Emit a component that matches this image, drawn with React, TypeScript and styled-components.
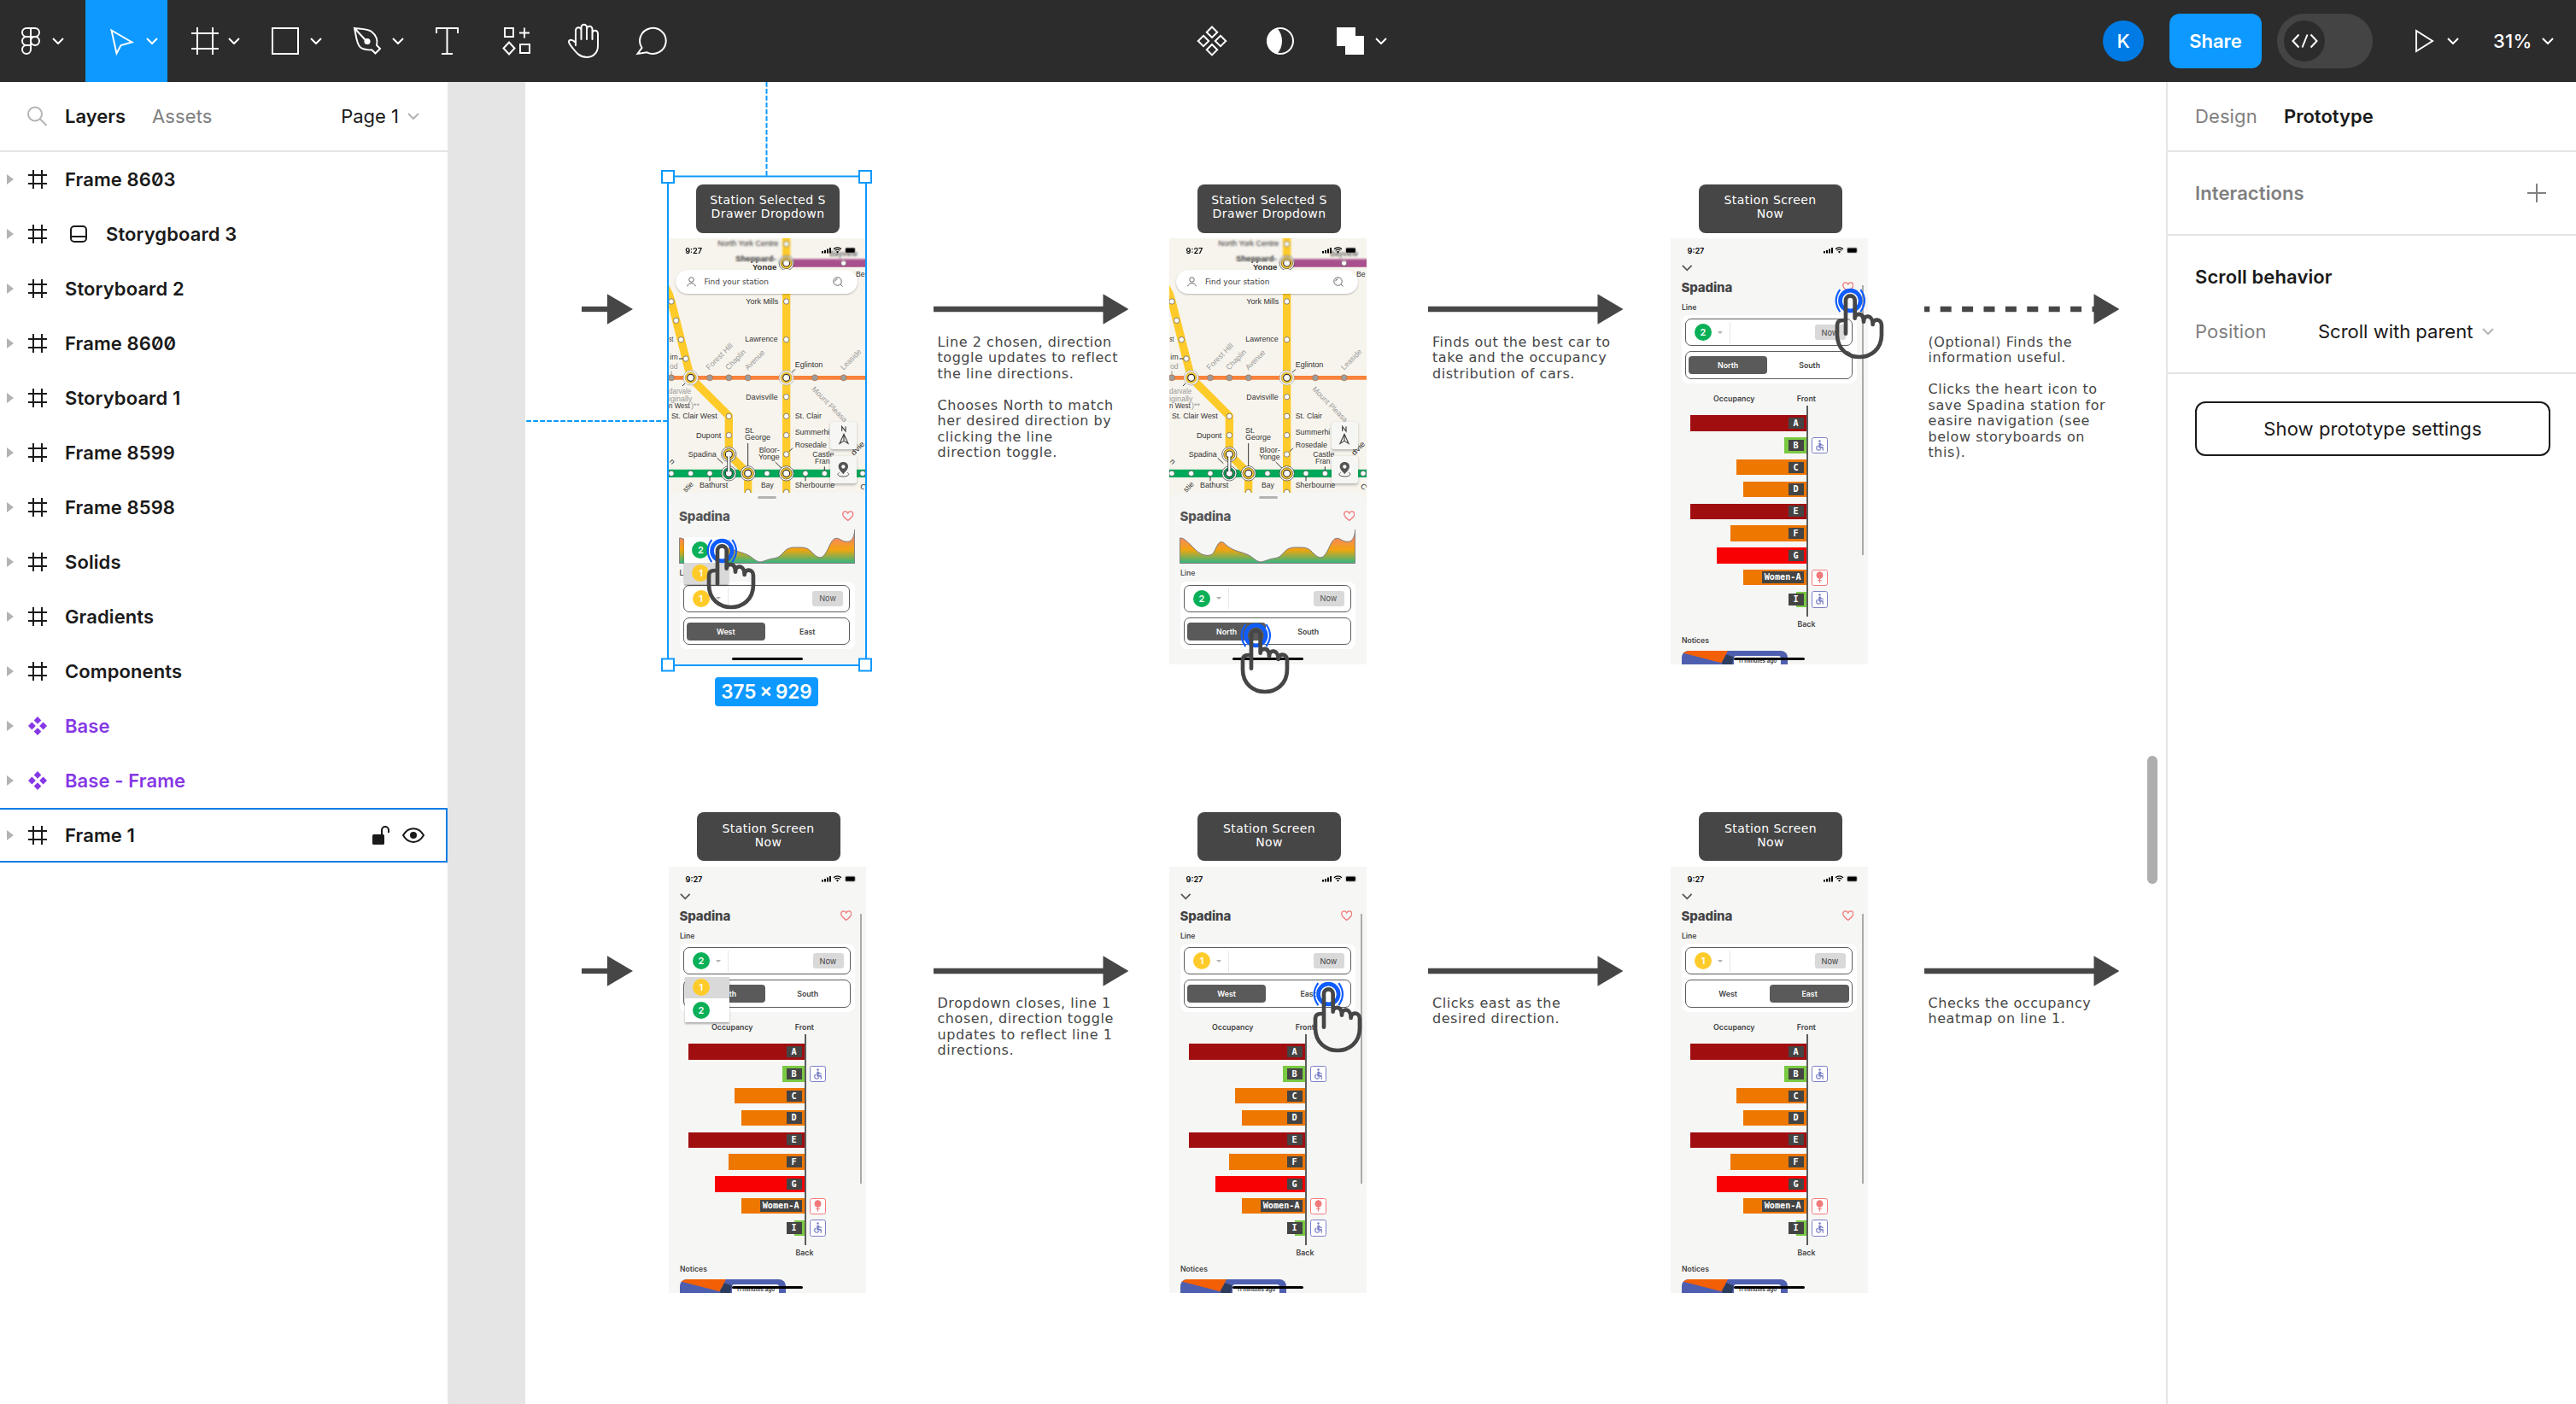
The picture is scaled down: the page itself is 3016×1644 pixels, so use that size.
import React from "react";
import styled, { createGlobalStyle, css } from "styled-components";
import { MdAccessible } from "react-icons/md";

const ui = `Inter, "Liberation Sans", sans-serif`;
const round = `"DejaVu Sans", Lato, sans-serif`;
const ink = "#464646";
const blue = "#0d99ff";

const Global = createGlobalStyle`
  * { box-sizing: border-box; }
  html, body { margin: 0; padding: 0; overflow: hidden; background: #fff; }
  body { font-family: ${ui}; color: #1a1a1a; }
  svg { display: block; flex-shrink: 0; }
`;

const Shell = styled.div`
  display: flex;
  flex-direction: column;
  width: 3016px;
  height: 1644px;
  overflow: hidden;
`;

/* ---------- toolbar ---------- */

const Toolbar = styled.header`
  display: grid;
  grid-template-columns: 1379px 1083px 1fr;
  height: 96px;
  flex-shrink: 0;
  background: #2c2c2c;
  color: #fff;
`;

const ToolGroup = styled.div`
  display: flex;
  align-items: stretch;
`;

const Tool = styled.button<{ $width?: number; $active?: boolean; $pad?: number; $gap?: number }>`
  display: flex;
  align-items: center;
  gap: ${(p) => p.$gap ?? 10}px;
  width: ${(p) => p.$width ?? 80}px;
  padding: 0 0 0 ${(p) => p.$pad ?? 20}px;
  border: 0;
  color: #fff;
  background: ${(p) => (p.$active ? blue : "transparent")};
`;

const Account = styled.div`
  display: flex;
  align-items: center;
`;

const Avatar = styled.div`
  display: grid;
  place-items: center;
  width: 48px;
  height: 48px;
  margin-right: 30px;
  border-radius: 50%;
  background: #007be5;
  font-size: 22px;
  font-weight: 500;
`;

const ShareButton = styled.button`
  width: 108px;
  height: 64px;
  margin-right: 18px;
  border: 0;
  border-radius: 12px;
  background: ${blue};
  color: #fff;
  font: 600 22px ${ui};
`;

const DevToggle = styled.div`
  display: flex;
  align-items: center;
  width: 112px;
  height: 64px;
  padding-left: 8px;
  border-radius: 32px;
  background: #444;
`;

const Knob = styled.div`
  display: grid;
  place-items: center;
  width: 48px;
  height: 48px;
  border-radius: 50%;
  background: #2c2c2c;
`;

const PlayButton = styled.div`
  display: flex;
  align-items: center;
  gap: 14px;
  margin-left: 49px;
  width: 93px;
`;

const ZoomLevel = styled.div`
  display: flex;
  align-items: center;
  width: 96px;
  font-size: 22px;
  font-weight: 500;
  letter-spacing: 0.3px;
  & > span { width: 57px; margin-left: -1px; }
`;

/* ---------- panels ---------- */

const Body = styled.main`
  display: flex;
  flex: 1;
  min-height: 0;
`;

const LeftPanel = styled.aside`
  width: 524px;
  flex-shrink: 0;
  background: #fff;
`;

const LeftTabs = styled.div`
  display: flex;
  align-items: center;
  height: 82px;
  padding: 0 33px 0 32px;
  border-bottom: 2px solid #e5e5e5;
`;

const Tab = styled.span<{ $active?: boolean; $width: number }>`
  width: ${(p) => p.$width}px;
  font-size: 22px;
  letter-spacing: ${(p) => (p.$active ? 0 : 0.1)}px;
  font-weight: ${(p) => (p.$active ? 600 : 400)};
  color: ${(p) => (p.$active ? "#1a1a1a" : "#808080")};
`;

const PagePicker = styled.span`
  display: flex;
  align-items: center;
  gap: 10px;
  margin-left: auto;
  font-size: 22px;
  white-space: nowrap;
`;

const LayerRow = styled.div<{ $purple?: boolean; $focus?: boolean }>`
  display: flex;
  align-items: center;
  height: 64px;
  padding: 0 27px 0 8px;
  color: ${(p) => (p.$purple ? "#8638e5" : "#1a1a1a")};
  box-shadow: ${(p) => (p.$focus ? "inset -2px 0 #0c7ce5, inset 0 2px #0c7ce5, inset 0 -2px #0c7ce5" : "none")};
`;

const LayerIcon = styled.span<{ $width: number }>`
  display: flex;
  align-items: center;
  width: ${(p) => p.$width}px;
`;

const LayerName = styled.span`
  flex: 1;
  font-size: 22px;
  font-weight: 600;
  letter-spacing: 0.1px;
  font-feature-settings: "zero" 1;
`;

const RowActions = styled.span`
  display: flex;
  align-items: center;
  gap: 15px;
`;

const RightPanel = styled.aside`
  width: 480px;
  flex-shrink: 0;
  border-left: 2px solid #e5e5e5;
  background: #fff;
`;

const PanelSection = styled.section<{ $height: number; $column?: boolean }>`
  display: flex;
  flex-direction: ${(p) => (p.$column ? "column" : "row")};
  align-items: ${(p) => (p.$column ? "stretch" : "center")};
  height: ${(p) => p.$height}px;
  padding: 0 35px 0 32px;
  border-bottom: 2px solid #e5e5e5;
`;

const SectionTitle = styled.h3<{ $muted?: boolean }>`
  flex: 1;
  margin: 0;
  font-size: 22px;
  font-weight: 600;
  letter-spacing: 0.1px;
  color: ${(p) => (p.$muted ? "#808080" : "#1a1a1a")};
`;

const ScrollTitle = styled(SectionTitle)`
  flex: none;
  padding-top: 32px;
  line-height: 32px;
`;

const PropertyRow = styled.div`
  display: flex;
  align-items: center;
  height: 64px;
  margin-top: 16px;
  font-size: 22px;
  letter-spacing: 0.1px;
`;

const PropertyLabel = styled.span`
  width: 144px;
  color: #808080;
`;

const PropertyValue = styled.span`
  display: flex;
  align-items: center;
  gap: 11px;
  letter-spacing: 0;
`;

const OutlineButton = styled.button`
  display: block;
  width: 416px;
  height: 64px;
  margin: 32px 0 0 32px;
  border: 2px solid #1a1a1a;
  border-radius: 12px;
  background: #fff;
  color: #1a1a1a;
  font: 400 22px ${ui};
  letter-spacing: 0.1px;
`;

/* ---------- canvas ---------- */

const Canvas = styled.section`
  position: relative;
  flex: 1;
  padding-left: 91px;
  background: #e5e5e5;
  overflow: hidden;
`;

const Board = styled.div`
  position: relative;
  height: 100%;
  background: #fff;
`;

/* Items on the free canvas; coordinates are those of the window. */
const at = css<{ $x: number; $y: number }>`
  position: absolute;
  left: ${(p) => p.$x - 615}px;
  top: ${(p) => p.$y - 96}px;
`;

const Pinned = styled.div<{ $x: number; $y: number }>`
  ${at}
`;

const Tag = styled.div<{ $x: number; $y: number }>`
  ${at}
  width: 168px;
  height: 57px;
  padding-top: 10.5px;
  border-radius: 8px;
  background: ${ink};
  color: #fff;
  text-align: center;
  white-space: pre;
  font: 400 14px/16px ${round};
  letter-spacing: 0.4px;
`;

const Note = styled.div<{ $x: number; $y: number }>`
  ${at}
  color: ${ink};
  white-space: pre;
  font: 400 16px/18.45px ${round};
  letter-spacing: 0.55px;
`;

const SizeBadge = styled.div<{ $x: number; $y: number }>`
  ${at}
  display: grid;
  place-items: center;
  width: 121px;
  height: 34px;
  border-radius: 4px;
  background: ${blue};
  color: #fff;
  font-size: 22.5px;
  font-weight: 600;
  word-spacing: -2px;
  white-space: nowrap;
`;

const ScrollThumb = styled.div<{ $x: number; $y: number }>`
  ${at}
  width: 12px;
  height: 150px;
  border-radius: 6px;
  background: #aeaeae;
`;

/* ---------- phone ---------- */

const Phone = styled.div<{ $x: number; $y: number; $map?: boolean }>`
  ${at}
  display: flex;
  flex-direction: column;
  width: 231px;
  height: 499px;
  overflow: hidden;
  background: ${(p) => (p.$map ? "#f7f4ed" : "#f6f6f5")};
  color: #444;
`;

const StatusBar = styled.div<{ $frosted?: boolean }>`
  position: relative;
  display: flex;
  align-items: center;
  justify-content: space-between;
  height: 28.4px;
  flex-shrink: 0;
  padding: 0 11px 0 19.6px;
  color: #000;
  font-size: 9.2px;
  font-weight: 600;
  backdrop-filter: ${(p) => (p.$frosted ? "blur(1.1px)" : "none")};
`;

const MapArea = styled.div`
  position: relative;
  height: 298px;
  flex-shrink: 0;
`;

const MapLayer = styled.div`
  position: absolute;
  inset: 0;
`;

const SearchBar = styled.div`
  position: relative;
  display: flex;
  align-items: center;
  width: 213px;
  height: 28px;
  margin: 8.3px 0 0 8px;
  padding: 0 17px 0 13px;
  border-radius: 14px;
  background: #fff;
  box-shadow: 0 1px 2px rgba(0, 0, 0, 0.25);
  font: 400 9px ${round};
  & > span { flex: 1; margin-left: 10px; }
`;

const MapButton = styled.div<{ $top: number }>`
  position: absolute;
  left: 189.5px;
  top: ${(p) => p.$top}px;
  display: grid;
  place-items: center;
  width: 31.3px;
  height: 31.7px;
  border-radius: 3px;
  background: #f6f6f5;
  box-shadow: 0 1.5px 3px rgba(0, 0, 0, 0.25);
`;

const Drawer = styled.div`
  position: relative;
  flex: 1;
  border-radius: 14px 14px 0 0;
  background: #f6f6f5;
  color: #555;
`;

const HandleRow = styled.div`
  display: flex;
  justify-content: center;
  height: 11.2px;
  padding-top: 4px;
`;

const Handle = styled.i`
  width: 22px;
  height: 3.2px;
  border-radius: 2px;
  background: #b3b3b3;
`;

const TitleRow = styled.div<{ $height: number }>`
  display: flex;
  align-items: center;
  justify-content: space-between;
  height: ${(p) => p.$height}px;
  flex-shrink: 0;
  padding: 0 ${(p) => (p.$height > 32 ? 17 : 14)}px 0 12.5px;
  font-size: 15px;
  font-weight: 800;
  letter-spacing: -0.15px;
`;

const Collapse = styled.div`
  display: flex;
  align-items: center;
  height: 13px;
  flex-shrink: 0;
  padding-left: 13px;
`;

const Profile = styled.div`
  height: 43.9px;
  padding-left: 12px;
`;

const FieldLabel = styled.div<{ $height: number }>`
  height: ${(p) => p.$height}px;
  flex-shrink: 0;
  padding-left: 13px;
  font-size: 8.6px;
  font-weight: 600;
  line-height: 15.6px;
`;

const Controls = styled.div`
  display: flex;
  flex-direction: column;
  gap: 6.2px;
  width: 204.8px;
  height: 79.4px;
  flex-shrink: 0;
  margin-left: 13.2px;
  padding: 3.8px 5.2px 0 4.2px;
  border-radius: 8px;
  background: #fff;
`;

const Field = styled.div`
  display: flex;
  align-items: center;
  height: 32.2px;
  border: 1px solid #5c5c5c;
  border-radius: 7px;
`;

const LineField = styled(Field)`
  padding: 0 7.3px 0 9.6px;
`;

const Bullet = styled.b<{ $line: number }>`
  display: grid;
  place-items: center;
  width: 20px;
  height: 20px;
  flex-shrink: 0;
  border-radius: 50%;
  background: ${(p) => (p.$line === 1 ? "#ffcb2a" : "#0ab057")};
  color: #fff;
  font: 600 11px ${ui};
`;

const Caret = styled.i`
  margin-left: 7px;
  border: 3.5px solid transparent;
  border-top-color: #b0b0b0;
  border-bottom-width: 0;
`;

const Divider = styled.i`
  width: 1.5px;
  height: 25px;
  margin: 0 auto 0 8px;
  background: #e6e6e6;
`;

const NowButton = styled.span`
  display: grid;
  place-items: center;
  width: 36px;
  height: 17.8px;
  border-radius: 3px;
  background: #d9d9d9;
  font-size: 9.2px;
`;

const ToggleField = styled(Field)`
  gap: 3.2px;
  padding: 0 3px 0 2.6px;
`;

const Side = styled.span<{ $on?: boolean }>`
  display: grid;
  place-items: center;
  flex: 1;
  height: 20.8px;
  border-radius: 4px;
  background: ${(p) => (p.$on ? "#5a5a5a" : "transparent")};
  color: ${(p) => (p.$on ? "#fff" : "#444")};
  font-size: 8.8px;
  font-weight: 600;
`;

const Dropdown = styled.div<{ $top: number }>`
  position: absolute;
  left: 18.6px;
  top: ${(p) => p.$top}px;
  width: 52.2px;
  background: #fff;
  box-shadow: 0 2px 2px rgba(0, 0, 0, 0.3);
`;

const Option = styled.div<{ $hover?: boolean; $height: number }>`
  display: flex;
  align-items: center;
  height: ${(p) => p.$height}px;
  padding-left: 9.3px;
  background: ${(p) => (p.$hover ? "#d9d9d9" : "#fff")};
`;

const HomeBar = styled.i`
  position: absolute;
  left: 74px;
  bottom: 5px;
  width: 83px;
  height: 3px;
  border-radius: 2px;
  background: #000;
`;

const PageScroll = styled.i`
  position: absolute;
  left: 224px;
  top: 55px;
  width: 2px;
  height: 316px;
  background: #aaa;
`;

const ChartHead = styled.div`
  display: flex;
  height: 26.8px;
  flex-shrink: 0;
  padding-left: 50px;
  font-size: 8.8px;
  font-weight: 600;
  line-height: 35.6px;
  & > span:first-child { width: 97.8px; }
`;

const ChartBody = styled.div`
  display: flex;
  height: 247px;
  flex-shrink: 0;
`;

const Bars = styled.div`
  display: flex;
  flex-direction: column;
  align-items: flex-end;
  gap: 7.4px;
  width: 161px;
  padding-top: 11px;
  border-right: 2px solid #5c5c5c;
`;

const Bar = styled.div<{ $width: number; $color: string }>`
  display: flex;
  align-items: center;
  justify-content: flex-end;
  width: ${(p) => p.$width}px;
  height: 18.4px;
  flex-shrink: 0;
  padding-right: 3.4px;
  background: ${(p) => p.$color};
`;

const CarName = styled.b`
  flex-shrink: 0;
  min-width: 18px;
  height: 13.4px;
  padding: 0 3px;
  background: #444;
  color: #fff;
  text-align: center;
  font: 700 10.2px/13.4px "DejaVu Sans Mono", "Liberation Mono", monospace;
`;

const Amenities = styled.div`
  display: flex;
  flex-direction: column;
  gap: 6.4px;
  padding: 10.6px 0 0 4px;
`;

const Amenity = styled.div<{ $color?: string }>`
  display: grid;
  place-items: center;
  width: 19px;
  height: 19.4px;
  border-radius: 2.5px;
  border: ${(p) => (p.$color ? `1px solid ${p.$color}` : "0")};
  background: ${(p) => (p.$color ? "#fff" : "transparent")};
  color: ${(p) => p.$color};
`;

const BackLabel = styled.div`
  height: 19px;
  flex-shrink: 0;
  padding-left: 148.5px;
  font-size: 8.8px;
  font-weight: 600;
  line-height: 18.4px;
`;

const NoticesLabel = styled(FieldLabel)`
  padding-top: 1.5px;
`;

const NoticeCard = styled.div`
  position: relative;
  display: flex;
  width: 123.6px;
  height: 40px;
  flex-shrink: 0;
  margin-left: 13.2px;
  border-radius: 8px;
  overflow: hidden;
  background: #4f5fb0;
`;

const NoticeTime = styled.span`
  width: 55px;
  height: 30px;
  margin: 6.5px 0 0 -1px;
  padding-left: 5px;
  border-radius: 3px 3px 0 0;
  background: #fff;
  color: #333;
  white-space: nowrap;
  font-size: 6.4px;
  font-weight: 600;
  line-height: 12px;
`;

/* ---------- icons ---------- */

const Chevron = ({ color = "#fff", size = 14 }: { color?: string; size?: number }) => (
  <svg width={size} height={size / 2 + 1} viewBox="0 0 14 8" fill="none" stroke={color} strokeWidth="2">
    <path d="M1 1l6 6 6-6" />
  </svg>
);

const Glyph = ({ x, y, w, h, children }: { x: number; y: number; w: number; h: number; children: React.ReactNode }) => (
  <svg width={w} height={h} viewBox={`${x} ${y} ${w} ${h}`} fill="none" stroke="currentColor" strokeWidth="2">
    {children}
  </svg>
);

const FigmaLogo = () => (
  <Glyph x={24} y={31} w={24} h={34}>
    <path d="M36 33h-5a5 5 0 0 0 0 10h5zM36 33h5a5 5 0 0 1 0 10h-5zM36 43h-5a5 5 0 0 0 0 10h5z" />
    <circle cx="41" cy="48" r="5" />
    <path d="M36 53h-5a5 5 0 1 0 5 5z" />
  </Glyph>
);

const FrameGlyph = () => (
  <Glyph x={224} y={32} w={32} h={32}>
    <path d="M231 32v32M249 32v32M224 39h32M224 57h32" />
  </Glyph>
);

const MoveGlyph = () => (
  <Glyph x={128} y={31} w={29} h={33}>
    <path d="M130.500 34.500L154.500 48.500L141.500 52L136.500 61.500Z" />
  </Glyph>
);

const PenGlyph = () => (
  <Glyph x={413} y={31} w={34} h={34}>
    <path d="M415 33C423 34 431 34 435 37C440 41 442.500 47 441 53L445 57L439.500 62.500L435.500 58.500C430 58.500 426 58.500 422 55.500C417 51 417 41 415 33ZM415 33L428 47" />
    <circle cx="430" cy="48.500" r="2.600" fill="currentColor" />
  </Glyph>
);

const TextGlyph = () => (
  <Glyph x={510} y={32} w={27} h={32}>
    <path d="M511 39v-6h25v6M523.500 33v30M517 63h13" />
  </Glyph>
);

const ResourcesGlyph = () => (
  <Glyph x={587} y={31} w={35} h={34}>
    <path d="M591 33h10v10h-10zM609 52h11v10h-11zM614 32.500v12M608 38.500h12M596 49.500l6.500 7l-6.500 7l-6.500-7z" />
  </Glyph>
);

const HandGlyph = () => (
  <Glyph x={664} y={27} w={38} h={42}>
    <path
      strokeLinecap="round"
      d="M674 53V35.500a3.200 3.200 0 0 1 6.500 0V46M680.500 46V32a3.200 3.200 0 0 1 6.500 0V46M687 34a3.200 3.200 0 0 1 6.500 0V46M693.500 39a3.200 3.200 0 0 1 6.500 0V54C700 62 694 67 687 67C679 67 675 62 671 57C668 53 666 51 666 49C666 46 670 45.500 674 50"
    />
  </Glyph>
);

const CommentGlyph = () => (
  <Glyph x={744} y={31} w={38} h={34}>
    <path d="M751.500 56A15.300 15 0 1 1 757.500 61.300L746.500 63Z" />
  </Glyph>
);

const ComponentsGlyph = () => (
  <Glyph x={1400} y={29} w={38} h={38}>
    <path d="M1419 31.500l6.200 6.200l-6.200 6.200l-6.200-6.200zM1419 52l6.200 6.200l-6.200 6.200l-6.200-6.200zM1409 41.800l6.200 6.200l-6.200 6.200l-6.200-6.200zM1429 41.800l6.200 6.200l-6.200 6.200l-6.200-6.200z" />
  </Glyph>
);

const MaskGlyph = () => (
  <Glyph x={1482} y={31} w={34} h={34}>
    <circle cx="1499" cy="48" r="15" />
    <path stroke="none" fill="currentColor" d="M1495 33C1503 40 1503 56 1495 63A15.500 15.500 0 0 1 1495 33Z" />
  </Glyph>
);

const UnionGlyph = () => (
  <Glyph x={1565} y={32} w={32} h={32}>
    <path stroke="none" fill="currentColor" d="M1565 32h22v10h10v22h-22v-10h-10z" />
  </Glyph>
);

const SearchGlyph = () => (
  <svg width="24" height="24" viewBox="0 0 24 24" fill="none" stroke="#b3b3b3" strokeWidth="2">
    <circle cx="9" cy="9.500" r="8" />
    <path d="M14.500 15l8 8" />
  </svg>
);

const Hash = () => (
  <svg width="22" height="22" viewBox="0 0 22 22" fill="none" stroke="currentColor" strokeWidth="2">
    <path d="M6 0v22M16 0v22M0 6h22M0 16h22" />
  </svg>
);

const Diamonds = () => (
  <svg width="22" height="22" viewBox="0 0 22 22" fill="currentColor">
    <path d="M11 0l4.300 4.400L11 8.800 6.700 4.400zM11 13.200l4.300 4.400L11 22l-4.300-4.400zM4.400 6.600L8.800 11l-4.400 4.400L0 11zM17.600 6.600L22 11l-4.400 4.400L13.200 11z" />
  </svg>
);

const Triangle = () => (
  <svg width="8" height="12" viewBox="0 0 8 12" fill="#b3b3b3">
    <path d="M0 0l8 6-8 6z" />
  </svg>
);

const DrawerGlyph = () => (
  <svg width="20" height="20" viewBox="0 0 20 20" fill="none" stroke="#1a1a1a" strokeWidth="2">
    <rect x="1" y="1" width="18" height="18" rx="4" />
    <path d="M1 13h18" />
  </svg>
);

const Unlocked = () => (
  <svg width="20" height="22" viewBox="0 0 20 22">
    <rect x="0" y="10" width="14" height="12" rx="1.500" fill="#1a1a1a" />
    <path d="M11 10.500V5a4 4 0 0 1 8 0v3" fill="none" stroke="#1a1a1a" strokeWidth="2" />
  </svg>
);

const Eye = () => (
  <svg width="26" height="18" viewBox="0 0 26 18">
    <path d="M1 9C7-1.500 19-1.500 25 9C19 19.500 7 19.500 1 9Z" fill="none" stroke="#1a1a1a" strokeWidth="2" />
    <circle cx="13" cy="9" r="4" fill="#1a1a1a" />
  </svg>
);

const Heart = () => (
  <svg width="13.500" height="12.500" viewBox="0 0 27 25" fill="none" stroke="#f0797a" strokeWidth="2.600">
    <path d="M13.500 23C6 17.500 1.500 13 1.500 8.200C1.500 1 10.500-.5 13.500 6C16.500-.5 25.500 1 25.500 8.200C25.500 13 21 17.500 13.500 23Z" />
  </svg>
);

const StatusIcons = () => (
  <svg width="42" height="8" viewBox="0 0 42 8" fill="#000">
    <path d="M1 5h2v2.500H1zM4 4h2v3.500H4zM7 2.500h2v5H7zM10 1h2v6.500h-2z" />
    <path d="M19.500 7.500l-1.500-1.700a2.200 2.200 0 0 1 3 0z" />
    <path d="M16.600 4.400a4.200 4.200 0 0 1 5.800 0M15 2.700a6.500 6.500 0 0 1 9 0" fill="none" stroke="#000" strokeWidth="1.200" />
    <rect x="28.300" y="1" width="12.200" height="6.200" rx="1.600" fill="none" stroke="#999" strokeWidth=".6" />
    <rect x="29" y="1.500" width="10.800" height="5.200" rx="1" />
  </svg>
);

const Female = () => (
  <svg width="9" height="14" viewBox="0 0 18 28" fill="#f07a7b">
    <ellipse cx="9" cy="9" rx="8" ry="8.500" />
    <path d="M7.800 16h2.400v4h3.300v2.200h-3.300V27H7.800v-4.800H4.500V20h3.300z" />
  </svg>
);

const Cursor = () => (
  <svg width="63.300" height="90" viewBox="490 200 190 270" fill="none">
    <circle cx="557" cy="254" r="35.500" stroke="#0f5cff" strokeWidth="14" />
    <path d="M521 215Q493 254 521 293M593 215Q621 254 593 293" stroke="#0f5cff" strokeWidth="6.500" />
    <path
      d="M541 370V253A16 16 0 0 1 573 253V316C573 298 604 292 604 328C604 300 637 304 636 338C636 314 667 318 667 340V374C667 478 511 478 511 374V340Q511 323 532 323"
      stroke="#464646"
      strokeWidth="14"
      strokeLinecap="round"
      strokeLinejoin="round"
    />
  </svg>
);

const Arrow = ({ length, dashed }: { length: number; dashed?: boolean }) => (
  <svg width={length} height="36" viewBox={`0 0 ${length} 36`}>
    <path
      d={`M0 18H${length - 29}`}
      stroke={ink}
      strokeWidth="6.300"
      strokeDasharray={dashed ? "13 12.400" : undefined}
      strokeDashoffset={dashed ? 6.700 : 0}
    />
    <path d={`M${length - 30} .3L${length} 18L${length - 30} 35.700Z`} fill={ink} />
  </svg>
);

/* ---------- transit map ---------- */

type Label = { x: number; y: number; t: string; end?: boolean; grey?: boolean; bold?: boolean; r?: number; w?: number };

const labels: Label[] = [
  { x: 753, y: 326, t: "North York Centre", end: true, w: 213 },
  { x: 745, y: 380, t: "Sheppard-", end: true, bold: true, w: 143 },
  { x: 747, y: 409, t: "Yonge", end: true, bold: true, w: 85 },
  { x: 933, y: 360, t: "Bayview", w: 97 },
  { x: 1025, y: 434, t: "Be", w: 32 },
  { x: 753, y: 528, t: "York Mills", end: true, w: 114 },
  { x: 751, y: 662, t: "Lawrence", end: true, w: 115 },
  { x: 751, y: 864, t: "Davisville", end: true, w: 112 },
  { x: 538, y: 931, t: "St. Clair West", end: true, w: 161 },
  { x: 552, y: 999, t: "Dupont", end: true, w: 88 },
  { x: 635, y: 983, t: "St." },
  { x: 635, y: 1006, t: "George", w: 90 },
  { x: 535, y: 1066, t: "Spadina", end: true, w: 99 },
  { x: 757, y: 1050, t: "Bloor-", end: true, w: 72 },
  { x: 757, y: 1074, t: "Yonge", end: true, w: 74 },
  { x: 811, y: 750, t: "Eglinton", w: 98 },
  { x: 811, y: 931, t: "St. Clair", w: 94 },
  { x: 811, y: 988, t: "Summerhi", w: 122 },
  { x: 811, y: 1033, t: "Rosedale", w: 112 },
  { x: 873, y: 1066, t: "Castle", w: 75 },
  { x: 881, y: 1090, t: "Fran", w: 52 },
  { x: 476, y: 1175, t: "Bathurst", w: 100 },
  { x: 692, y: 1175, t: "Bay", w: 44 },
  { x: 811, y: 1175, t: "Sherbourne", w: 140 },
  { x: 510, y: 762, t: "Forest Hill", grey: true, r: -45, w: 120 },
  { x: 578, y: 762, t: "Chaplin", grey: true, r: -45, w: 88 },
  { x: 646, y: 762, t: "Avenue", grey: true, r: -45, w: 86 },
  { x: 982, y: 762, t: "Leaside", grey: true, r: -45, w: 90 },
  { x: 868, y: 830, t: "Mount Pleasa", grey: true, r: 45, w: 164 },
  { x: 447, y: 845, t: "darvale", end: true, grey: true, w: 79 },
  { x: 450, y: 871, t: "iginally", end: true, grey: true, w: 82 },
  { x: 442, y: 895, t: "n West", end: true, w: 74 },
  { x: 476, y: 895, t: ")**", end: true, grey: true },
  { x: 384, y: 662, t: "st", end: true, w: 15 },
  { x: 400, y: 723, t: "irn", end: true, w: 28 },
  { x: 400, y: 756, t: "od", end: true, grey: true, w: 29 },
  { x: 369, y: 1083, t: "n", r: 45 },
  { x: 428, y: 1192, t: "stie", r: -45, w: 40 },
  { x: 1018, y: 1062, t: "dvie", r: -45, w: 56 },
  { x: 1038, y: 1170, t: "C", r: 45 },
];

const stops = [
  [781, 318], [982, 385], [377, 520], [394, 587], [411, 654], [428, 721], [781, 520], [781, 654], [781, 855],
  [781, 923], [781, 990], [781, 1057], [579, 923], [579, 990], [377, 1124], [445, 1124], [512, 1124], [713, 1124],
  [848, 1124], [915, 1124], [1049, 1124], [646, 1190], [781, 1190],
];

const hubs: [number, number, string, string][] = [
  [781, 385, "#333", "#ffcb2a"],
  [445, 788, "#999", "#ffcb2a"],
  [781, 788, "#999", "#ffcb2a"],
  [579, 1057, "#333", "#ffcb2a"],
  [579, 1124, "#333", "#00a959"],
  [646, 1124, "#333", "#ffcb2a"],
  [781, 1124, "#333", "#ffcb2a"],
];

const TransitMap = () => (
  <svg width="231" height="298" viewBox="368 298 693 894" fontFamily='"Liberation Sans", Arial, sans-serif' fontSize="27">
    <rect x="368" y="298" width="693" height="894" fill="#f7f4ed" />
    <path d="M781 385H1070" stroke="#a8508d" strokeWidth="28" />
    <path d="M360 1124H1070" stroke="#00a959" strokeWidth="28" />
    <path d="M781 290V1200" stroke="#ffcb2a" strokeWidth="28" />
    <path
      d="M350 460Q370 490 377 520L445 788L579 922V1057L646 1124V1200"
      stroke="#ffcb2a"
      strokeWidth="28"
      fill="none"
      strokeLinejoin="round"
    />
    <path d="M360 788H1070" stroke="#f8833a" strokeWidth="14" />
    <path
      d="M404 721h16M416 817l10-10M812 758l-12 12M646 1018v82M538 1070l20 19M742 1084l22 22M791 1047l12-12M512 1135v16M848 1135v16M915 1100v14"
      stroke="#333"
      strokeWidth="3"
    />
    <path d="M377 764v14" stroke="#999" strokeWidth="3" />
    {[377, 512, 579, 646, 881, 982].map((x) => (
      <circle key={x} cx={x} cy="788" r="10.500" fill="#9d9d9d" stroke="#b5764c" strokeWidth="2.500" />
    ))}
    {stops.map(([x, y]) => (
      <circle key={`${x}-${y}`} cx={x} cy={y} r="9.500" fill="#fff" stroke="#4b4b4b" strokeWidth="2" />
    ))}
    {hubs.map(([x, y, ring, fill]) => (
      <g key={`${x}-${y}`}>
        <circle cx={x} cy={y} r="26" fill="#fff" stroke={ring} strokeWidth="2" />
        <circle cx={x} cy={y} r="20" fill={fill} stroke={ring} strokeWidth="2" />
        <circle cx={x} cy={y} r="12" fill="#fff" stroke="#333" strokeWidth="3.500" />
      </g>
    ))}
    <path d="M579 1064V1118" stroke="#333" strokeWidth="12" />
    <path d="M579 1057V1124" stroke="#fff" strokeWidth="7" />
    {labels.map((l) => (
      <text
        key={`${l.t}${l.y}`}
        x={l.x}
        y={l.y}
        fill={l.grey ? "#999" : "#333"}
        textAnchor={l.end ? "end" : "start"}
        fontWeight={l.bold ? 700 : 400}
        textLength={l.w}
        lengthAdjust="spacingAndGlyphs"
        transform={l.r ? `rotate(${l.r} ${l.x} ${l.y})` : undefined}
      >
        {l.t}
      </text>
    ))}
  </svg>
);

const OccupancyProfile = () => (
  <svg width="206" height="40" viewBox="94 236 618 120">
    <defs>
      <linearGradient id="heat" x1="0" y1="0" x2="0" y2="1">
        <stop offset=".2" stopColor="#fb8468" />
        <stop offset=".6" stopColor="#f0a50f" />
        <stop offset="1" stopColor="#2fb583" />
      </linearGradient>
    </defs>
    <path
      d="M95 266C110 264 125 283 150 307C165 321 180 328 195 327C212 326 215 315 225 295C233 278 243 275 254 287C280 312 305 312 335 325C350 332 362 347 376 350C392 350 400 341 430 337C455 333 458 312 478 303C490 298 500 299 520 299C545 299 552 307 565 320C578 333 590 339 600 330C620 312 625 270 645 267C660 266 665 279 685 279C705 279 710 255 711 237V354.500H95Z"
      fill="url(#heat)"
      stroke="#7b7b7b"
      strokeWidth="3"
    />
  </svg>
);

/* ---------- phone screens ---------- */

type Choice = { line: number; sides: [string, string]; selected: 0 | 1 };

const LineControls = ({ line, sides, selected }: Choice) => (
  <Controls>
    <LineField>
      <Bullet $line={line}>{line}</Bullet>
      <Caret />
      <Divider />
      <NowButton>Now</NowButton>
    </LineField>
    <ToggleField>
      <Side $on={selected === 0}>{sides[0]}</Side>
      <Side $on={selected === 1}>{sides[1]}</Side>
    </ToggleField>
  </Controls>
);

const MapPhone = ({ x, y, open, ...choice }: Choice & { x: number; y: number; open?: boolean }) => (
  <Phone $x={x} $y={y} $map>
    <MapArea>
      <MapLayer><TransitMap /></MapLayer>
      <StatusBar $frosted>9:27<StatusIcons /></StatusBar>
      <SearchBar>
        <svg width="11" height="12" viewBox="0 0 22 24" fill="none" stroke="#555" strokeWidth="1.800">
          <circle cx="11" cy="7" r="5.500" />
          <path d="M1.500 22.500C2 13 20 13 20.500 22.500" />
        </svg>
        <span>Find your station</span>
        <svg width="12" height="12" viewBox="0 0 24 24" fill="none" stroke="#555" strokeWidth="1.800">
          <circle cx="11" cy="11" r="9.500" />
          <path d="M18 18l5 5M5.500 11a5.500 5.500 0 0 1 5.500-5.500" />
        </svg>
      </SearchBar>
      <MapButton $top={214.7}>
        <svg width="14" height="24" viewBox="0 0 42 72" fill="none" stroke="#444" strokeWidth="3.500">
          <path d="M14 21V4L27 21V4" />
          <path d="M21 31L36 64L21 55L6 64ZM21 31V55" />
        </svg>
      </MapButton>
      <MapButton $top={254.7}>
        <svg width="15" height="18" viewBox="0 0 45 54">
          <path d="M22 0C10 0 5 8 5 16C5 27 15 33 22 43C29 33 39 27 39 16C39 8 34 0 22 0ZM22 10A6.500 6.500 0 1 1 22 23A6.500 6.500 0 1 1 22 10Z" fill="#555" fillRule="evenodd" />
          <path d="M8 37C-4 44 6 51 22 51C38 51 48 44 36 37" fill="none" stroke="#555" strokeWidth="3" />
        </svg>
      </MapButton>
    </MapArea>
    <Drawer>
      <HandleRow><Handle /></HandleRow>
      <TitleRow $height={31.4}>Spadina<Heart /></TitleRow>
      <Profile><OccupancyProfile /></Profile>
      <FieldLabel $height={17.2}>Line</FieldLabel>
      <LineControls {...choice} />
    </Drawer>
    {open && (
      <Dropdown $top={350}>
        <Option $height={29.7}><Bullet $line={2}>2</Bullet></Option>
        <Option $height={25} $hover><Bullet $line={1}>1</Bullet></Option>
      </Dropdown>
    )}
    <HomeBar />
  </Phone>
);

const maroon = "#a00e10";
const orange = "#ee7700";
const green = "#7ac943";

const cars = [
  { name: "A", width: 136, color: maroon },
  { name: "B", width: 25.6, color: green, access: true },
  { name: "C", width: 82, color: orange },
  { name: "D", width: 74, color: orange },
  { name: "E", width: 136, color: maroon },
  { name: "F", width: 89, color: orange },
  { name: "G", width: 105.5, color: "#f80003" },
  { name: "Women-A", width: 74, color: orange, women: true },
  { name: "I", width: 12, color: green, access: true },
];

const StationPhone = ({ x, y, open, ...choice }: Choice & { x: number; y: number; open?: boolean }) => (
  <Phone $x={x} $y={y}>
    <StatusBar>9:27<StatusIcons /></StatusBar>
    <Collapse><Chevron color="#555" size={12.5} /></Collapse>
    <TitleRow $height={32.2}>Spadina<Heart /></TitleRow>
    <FieldLabel $height={16.7}>Line</FieldLabel>
    <LineControls {...choice} />
    <ChartHead><span>Occupancy</span><span>Front</span></ChartHead>
    <ChartBody>
      <Bars>
        {cars.map((c) => (
          <Bar key={c.name} $width={c.width} $color={c.color}><CarName>{c.name}</CarName></Bar>
        ))}
      </Bars>
      <Amenities>
        {cars.map((c) => (
          <Amenity key={c.name} $color={c.access ? "#7a80c6" : c.women ? "#f07a7b" : undefined}>
            {c.access && <MdAccessible size={15} />}
            {c.women && <Female />}
          </Amenity>
        ))}
      </Amenities>
    </ChartBody>
    <BackLabel>Back</BackLabel>
    <NoticesLabel $height={20.3}>Notices</NoticesLabel>
    <NoticeCard>
      <svg width="62" height="17" viewBox="62 1483 173.600 44.400" preserveAspectRatio="none">
        <path d="M62 1489L82 1483H213L193 1520Z" fill="#f35f05" />
        <path d="M208 1494L232 1502L226 1530H200L193 1519Z" fill="#2c3c5e" />
      </svg>
      <NoticeTime>11 minutes ago</NoticeTime>
    </NoticeCard>
    {open && (
      <Dropdown $top={128.600}>
        <Option $height={25.8} $hover><Bullet $line={1}>1</Bullet></Option>
        <Option $height={27.8}><Bullet $line={2}>2</Bullet></Option>
      </Dropdown>
    )}
    <PageScroll />
    <HomeBar />
  </Phone>
);

/* ---------- selection ---------- */

const Selection = () => (
  <svg width="410" height="700" viewBox="615 96 410 700" fill="none" stroke={blue} strokeWidth="2">
    <path d="M897.500 96V206M782 493H615" strokeDasharray="5.800 2.200" />
    <rect x="782" y="206.500" width="232" height="572.500" />
    {[[782, 207], [1013, 207], [782, 778.5], [1013, 778.5]].map(([x, y]) => (
      <rect key={`${x}-${y}`} x={x - 7} y={y - 7} width="14" height="14" fill="#fff" />
    ))}
  </svg>
);

/* ---------- data ---------- */

const layers: { name: string; kind?: "drawer" | "component"; focus?: boolean }[] = [
  { name: "Frame 8603" },
  { name: "Storygboard 3", kind: "drawer" },
  { name: "Storyboard 2" },
  { name: "Frame 8600" },
  { name: "Storyboard 1" },
  { name: "Frame 8599" },
  { name: "Frame 8598" },
  { name: "Solids" },
  { name: "Gradients" },
  { name: "Components" },
  { name: "Base", kind: "component" },
  { name: "Base - Frame", kind: "component" },
  { name: "Frame 1", focus: true },
];

const tags: [number, number, string][] = [
  [815, 215.5, "Station Selected S\nDrawer Dropdown"],
  [1402, 215.5, "Station Selected S\nDrawer Dropdown"],
  [1988.5, 215.5, "Station Screen\nNow"],
  [815.5, 951, "Station Screen\nNow"],
  [1402, 951, "Station Screen\nNow"],
  [1989, 951, "Station Screen\nNow"],
];

const notes: [number, number, string][] = [
  [1097.5, 392, "Line 2 chosen, direction\ntoggle updates to reflect\nthe line directions.\n\nChooses North to match\nher desired direction by\nclicking the line\ndirection toggle."],
  [1677, 392, "Finds out the best car to\ntake and the occupancy\ndistribution of cars."],
  [2257.5, 392, "(Optional) Finds the\ninformation useful.\n\nClicks the heart icon to\nsave Spadina station for\neasire navigation (see\nbelow storyboards on\nthis)."],
  [1097.5, 1166, "Dropdown closes, line 1\nchosen, direction toggle\nupdates to reflect line 1\ndirections."],
  [1677, 1166, "Clicks east as the\ndesired direction."],
  [2257.5, 1166, "Checks the occupancy\nheatmap on line 1."],
];

const arrows: [number, number, number, boolean?][] = [
  [681, 344, 60],
  [1092.5, 344.3, 228.5],
  [1672.3, 344.3, 228.5],
  [2252.5, 344.3, 228.5, true],
  [681, 1119.3, 60],
  [1092.5, 1118.6, 228.5],
  [1672.3, 1118.6, 228.5],
  [2252.5, 1118.6, 228.5],
];

const cursors = [[845.7, 644.7], [1470, 744], [2166.3, 351.7], [1555.4, 1164.2]];

export default function App() {
  return (
    <Shell>
      <Global />
      <Toolbar>
        <ToolGroup>
          <Tool $width={100} $pad={24} $gap={13}><FigmaLogo /><Chevron /></Tool>
          <Tool $width={96} $pad={28} $gap={14} $active><MoveGlyph /><Chevron /></Tool>
          <Tool $width={96} $pad={28} $gap={11}><FrameGlyph /><Chevron /></Tool>
          <Tool $width={96} $pad={26} $gap={13}>
            <Glyph x={318} y={32} w={32} h={32}><rect x="319" y="33" width="30" height="30" /></Glyph>
            <Chevron />
          </Tool>
          <Tool $width={96} $pad={25} $gap={12}><PenGlyph /><Chevron /></Tool>
          <Tool $pad={26}><TextGlyph /></Tool>
          <Tool $pad={23}><ResourcesGlyph /></Tool>
          <Tool $pad={20}><HandGlyph /></Tool>
          <Tool $pad={20}><CommentGlyph /></Tool>
        </ToolGroup>
        <ToolGroup>
          <Tool $pad={21}><ComponentsGlyph /></Tool>
          <Tool $pad={23}><MaskGlyph /></Tool>
          <Tool $width={106} $pad={26} $gap={13}><UnionGlyph /><Chevron /></Tool>
        </ToolGroup>
        <Account>
          <Avatar>K</Avatar>
          <ShareButton>Share</ShareButton>
          <DevToggle>
            <Knob>
              <svg width="31" height="18" viewBox="0 0 31 18" fill="none" stroke="#fff" strokeWidth="2">
                <path d="M8.500 1.500L1.500 9l7 7.500M22.500 1.500l7 7.500-7 7.500M18.500 1.500l-6 15" />
              </svg>
            </Knob>
          </DevToggle>
          <PlayButton>
            <svg width="24" height="30" viewBox="0 0 24 30" fill="none" stroke="#fff" strokeWidth="2">
              <path d="M2 3L21 15L2 27Z" />
            </svg>
            <Chevron />
          </PlayButton>
          <ZoomLevel><span>31%</span><Chevron /></ZoomLevel>
        </Account>
      </Toolbar>

      <Body>
        <LeftPanel>
          <LeftTabs>
            <LayerIcon $width={44}><SearchGlyph /></LayerIcon>
            <Tab $active $width={102}>Layers</Tab>
            <Tab $width={80}>Assets</Tab>
            <PagePicker>Page 1<Chevron color="#b3b3b3" /></PagePicker>
          </LeftTabs>
          {layers.map((l) => (
            <LayerRow key={l.name} $purple={l.kind === "component"} $focus={l.focus}>
              <LayerIcon $width={25}><Triangle /></LayerIcon>
              <LayerIcon $width={l.kind === "drawer" ? 49 : 43}>{l.kind === "component" ? <Diamonds /> : <Hash />}</LayerIcon>
              {l.kind === "drawer" && <LayerIcon $width={42}><DrawerGlyph /></LayerIcon>}
              <LayerName>{l.name}</LayerName>
              {l.focus && <RowActions><Unlocked /><Eye /></RowActions>}
            </LayerRow>
          ))}
        </LeftPanel>

        <Canvas>
          <Board>
            {arrows.map(([x, y, length, dashed]) => (
              <Pinned key={`${x}-${y}`} $x={x} $y={y}><Arrow length={length} dashed={dashed} /></Pinned>
            ))}
            {tags.map(([x, y, text]) => (
              <Tag key={`${x}-${y}`} $x={x} $y={y}>{text}</Tag>
            ))}
            {notes.map(([x, y, text]) => (
              <Note key={`${x}-${y}`} $x={x} $y={y}>{text}</Note>
            ))}
            <MapPhone x={782.6} y={279.3} line={1} sides={["West", "East"]} selected={0} open />
            <MapPhone x={1369} y={279.3} line={2} sides={["North", "South"]} selected={0} />
            <StationPhone x={1956} y={279} line={2} sides={["North", "South"]} selected={0} />
            <StationPhone x={783} y={1015} line={2} sides={["North", "South"]} selected={0} open />
            <StationPhone x={1369} y={1015} line={1} sides={["West", "East"]} selected={0} />
            <StationPhone x={1956} y={1015} line={1} sides={["West", "East"]} selected={1} />
            {cursors.map(([x, y]) => (
              <Pinned key={x} $x={x - 22.3} $y={y - 18}><Cursor /></Pinned>
            ))}
            <Pinned $x={615} $y={96}><Selection /></Pinned>
            <SizeBadge $x={837} $y={792.5}>375 × 929</SizeBadge>
            <ScrollThumb $x={2514} $y={885} />
          </Board>
        </Canvas>

        <RightPanel>
          <PanelSection $height={82}>
            <Tab $width={104}>Design</Tab>
            <Tab $active $width={120}>Prototype</Tab>
          </PanelSection>
          <PanelSection $height={98}>
            <SectionTitle $muted>Interactions</SectionTitle>
            <svg width="22" height="22" viewBox="0 0 22 22" stroke="#808080" strokeWidth="2">
              <path d="M11 0v22M0 11h22" />
            </svg>
          </PanelSection>
          <PanelSection $height={162} $column>
            <ScrollTitle>Scroll behavior</ScrollTitle>
            <PropertyRow>
              <PropertyLabel>Position</PropertyLabel>
              <PropertyValue>Scroll with parent<Chevron color="#b3b3b3" /></PropertyValue>
            </PropertyRow>
          </PanelSection>
          <OutlineButton>Show prototype settings</OutlineButton>
        </RightPanel>
      </Body>
    </Shell>
  );
}
